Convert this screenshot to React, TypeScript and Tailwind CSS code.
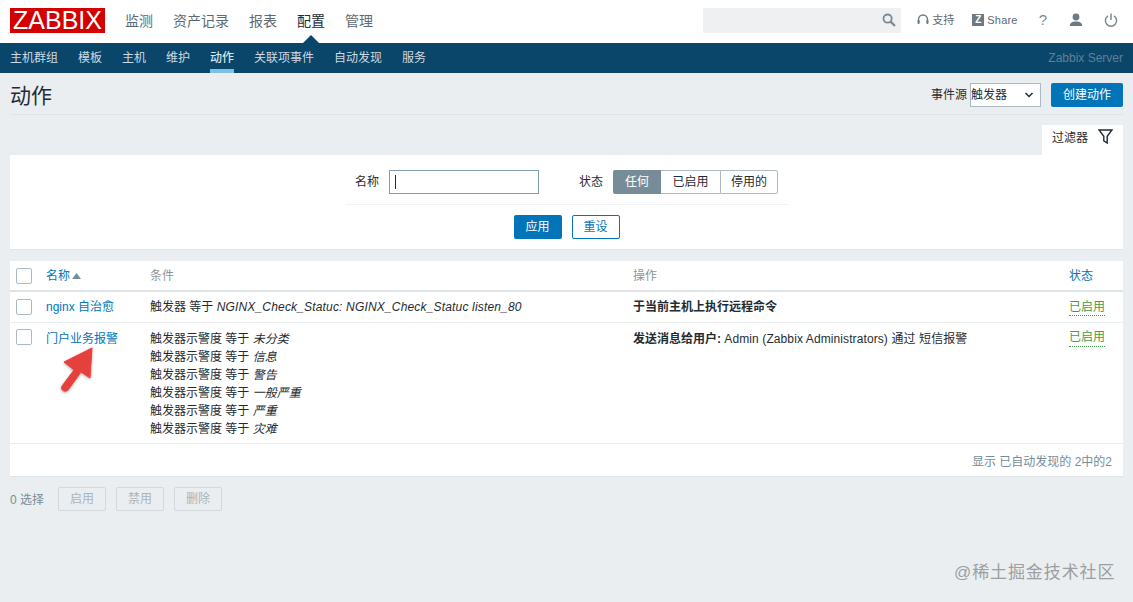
import React from "react";

const font = { fontFamily: '"Liberation Sans", "Noto Sans CJK SC", sans-serif' };

const SearchIcon = () => (
  <svg width="14" height="14" viewBox="0 0 14 14" fill="none" stroke="#7d8a93" strokeWidth="1.8">
    <circle cx="5.6" cy="5.6" r="4.1" />
    <path d="M8.6 8.6L13 13" strokeWidth="2.2" />
  </svg>
);
const HeadsetIcon = () => (
  <svg width="12" height="13" viewBox="0 0 12 13" fill="none">
    <path d="M1.5 8V5.5a4.5 4.5 0 0 1 9 0V8" stroke="#6d7a83" strokeWidth="1.4" />
    <rect x="0.5" y="6" width="2.2" height="4" rx="1" fill="#6d7a83" />
    <rect x="9.3" y="6" width="2.2" height="4" rx="1" fill="#6d7a83" />
  </svg>
);
const UserIcon = () => (
  <svg width="14" height="14" viewBox="0 0 14 14" fill="#6d7a83">
    <circle cx="7" cy="4" r="3.4" />
    <path d="M0.8 13c0-3.2 2.6-4.6 6.2-4.6s6.2 1.4 6.2 4.6z" />
  </svg>
);
const PowerIcon = () => (
  <svg width="14" height="14" viewBox="0 0 14 14" fill="none" stroke="#7d8a93" strokeWidth="1.5">
    <path d="M4 2.8a5.6 5.6 0 1 0 6 0" />
    <path d="M7 0.5V7" />
  </svg>
);
const FilterIcon = () => (
  <svg width="15" height="15" viewBox="0 0 15 15" fill="none" stroke="#1f2c33" strokeWidth="1.4">
    <path d="M1 1h13L9.2 7.2V14L5.8 11.8V7.2z" />
  </svg>
);

const Checkbox = () => (
  <div className="w-4 h-4 bg-white border border-[#acbbc2] rounded-[2px] shrink-0" />
);

const top = ["监测", "资产记录", "报表", "配置", "管理"];
const sub = ["主机群组", "模板", "主机", "维护", "动作", "关联项事件", "自动发现", "服务"];
const severities = ["未分类", "信息", "警告", "一般严重", "严重", "灾难"];

export default function App() {
  return (
    <div className="relative w-[1133px] h-[602px] overflow-hidden bg-[#ebeef0] text-[12px] text-[#1f2c33]" style={font}>
      {/* Header */}
      <header className="h-[43px] bg-white flex items-center">
        <div className="ml-[10px] w-[95px] h-[25px] bg-[#d40000] text-white text-[25px] leading-[25px] text-center font-normal mt-[-2px]">
          ZABBIX
        </div>
        <nav className="ml-[20px] flex gap-[20px] text-[14px] mt-[-1px]">
          {top.map((t) => (
            <span key={t} className={t === "配置" ? "text-[#1f2c33]" : "text-[#5c6a73]"}>
              {t}
            </span>
          ))}
        </nav>
        <div className="ml-auto flex items-center">
          <div className="w-[198px] h-[25px] bg-[#eef0f1] flex items-center justify-end pr-[5px] mt-[-3px]">
            <SearchIcon />
          </div>
          <div className="ml-[16px] flex items-center gap-[3px] text-[#5c6a73] text-[11px] mt-[-3px]">
            <HeadsetIcon />
            <span>支持</span>
          </div>
          <div className="ml-[18px] flex items-center gap-[3px] text-[#5c6a73] text-[11px] mt-[-3px] tracking-[0.2px]">
            <span className="w-[12px] h-[12px] bg-[#6d7a83] text-white text-[10px] leading-[12px] font-bold text-center">Z</span>
            <span>Share</span>
          </div>
          <span className="ml-[21px] text-[#7d8a93] text-[15px] mt-[-3px]">?</span>
          <span className="ml-[22px] flex mt-[-4px]"><UserIcon /></span>
          <span className="ml-[21px] mr-[15px] flex mt-[-4px]"><PowerIcon /></span>
        </div>
      </header>

      {/* Sub nav */}
      <div className="relative h-[30px] bg-[#0a466a] flex items-center pl-[10px] pr-[10px] text-[12px]">
        <div className="absolute left-[303px] top-[-8px] w-0 h-0 border-l-[8px] border-r-[8px] border-b-[8px] border-l-transparent border-r-transparent border-b-[#0a466a]" />
        <div className="flex gap-[20px] h-full items-center">
          {sub.map((t) => (
            <span
              key={t}
              className={
                t === "动作"
                  ? "relative h-full flex items-center text-[#d7e4ec] font-medium border-b-[4px] border-[#7fbfe3] pt-[4px]"
                  : "text-[#cddae2]"
              }
            >
              {t}
            </span>
          ))}
        </div>
        <span className="ml-auto text-[#5d8199]">Zabbix Server</span>
      </div>

      {/* Title row */}
      <div className="mx-[10px] h-[42px] border-b border-[#dfe4e7] flex items-center justify-between">
        <h1 className="text-[21px] text-[#1f2c33] font-normal mt-[5px]">动作</h1>
        <div className="flex items-center mt-[3px]">
          <span>事件源</span>
          <div className="ml-[3px] w-[71px] h-[24px] bg-white border border-[#acbbc2] flex items-center justify-between pr-[6px]">
            <span>触发器</span>
            <svg width="10" height="6" viewBox="0 0 10 6" fill="none" stroke="#1f2c33" strokeWidth="1.5">
              <path d="M1.5 1L5 4.5L8.5 1" />
            </svg>
          </div>
          <button className="ml-[10px] w-[72px] h-[24px] bg-[#0275b8] text-white rounded-[2px]">创建动作</button>
        </div>
      </div>

      {/* Filter tab */}
      <div className="mt-[10px] mr-[10px] flex justify-end">
        <div className="w-[81px] h-[30px] bg-white flex items-start pl-[10px] pt-[4px] gap-[10px]">
          <span>过滤器</span>
          <FilterIcon />
        </div>
      </div>

      {/* Filter panel */}
      <section className="mx-[10px] h-[95px] bg-white border-b border-[#dfe4e7] flex flex-col items-center">
        <div className="w-[442px] h-[50px] ml-[1px] border-b border-[#f0f2f3] flex items-center pt-[5px]">
          <span className="ml-[9px]">名称</span>
          <div className="ml-[10px] w-[150px] h-[24px] bg-white border border-[#7f9fb1] flex items-center pl-[5px]">
            <span className="w-px h-[14px] bg-[#1f2c33]" />
          </div>
          <span className="ml-[40px]">状态</span>
          <div className="ml-[10px] flex h-[24px]">
            <span className="w-[48px] bg-[#768d99] text-white flex items-center justify-center rounded-l-[2px]">任何</span>
            <span className="w-[59px] bg-white border-y border-[#acbbc2] flex items-center justify-center">已启用</span>
            <span className="w-[58px] bg-white border border-[#acbbc2] flex items-center justify-center rounded-r-[2px]">停用的</span>
          </div>
        </div>
        <div className="mt-[10px] flex gap-[10px]">
          <button className="w-[48px] h-[24px] bg-[#0275b8] text-white rounded-[2px]">应用</button>
          <button className="w-[48px] h-[24px] bg-white text-[#0275b8] border border-[#0275b8] rounded-[2px]">重设</button>
        </div>
      </section>

      {/* Table */}
      <section className="mx-[10px] mt-[11px] h-[216px] bg-white border-b border-[#dfe4e7] flex flex-col">
        <div className="h-[31px] border-b-2 border-[#dfe4e7] flex items-center shrink-0">
          <div className="w-[36px] pl-[6px] flex"><Checkbox /></div>
          <div className="w-[104px] flex items-center gap-[2px] text-[#0275b8]">
            <span>名称</span>
            <svg width="9" height="6" viewBox="0 0 9 6" fill="#768d99"><path d="M4.5 0L9 6H0z" /></svg>
          </div>
          <div className="w-[483px] text-[#8a969d]">条件</div>
          <div className="w-[436px] text-[#8a969d]">操作</div>
          <div className="text-[#0275b8]">状态</div>
        </div>
        <div className="h-[31px] border-b border-[#ebeef0] flex items-center shrink-0">
          <div className="w-[36px] pl-[6px] flex"><Checkbox /></div>
          <div className="w-[104px] text-[#0275b8]">nginx 自治愈</div>
          <div className="w-[483px]">
            触发器 等于 <i className="tracking-[0.17px]">NGINX_Check_Statuc: NGINX_Check_Statuc listen_80</i>
          </div>
          <div className="w-[436px] font-bold">于当前主机上执行远程命令</div>
          <div className="text-[#429e47] border-b border-dotted border-[#429e47] leading-[15px] mt-[2px]">已启用</div>
        </div>
        <div className="h-[121px] border-b border-[#ebeef0] flex shrink-0 pt-[6px]">
          <div className="w-[36px] pl-[6px] flex items-start"><Checkbox /></div>
          <div className="w-[104px] text-[#0275b8] leading-[18px] pt-[1px]">门户业务报警</div>
          <div className="w-[483px] leading-[18px] pt-[1px]">
            {severities.map((s) => (
              <div key={s}>
                触发器示警度 等于 <i>{s}</i>
              </div>
            ))}
          </div>
          <div className="w-[436px] leading-[18px] pt-[1px]">
            <b>发送消息给用户:</b> <span className="tracking-[0.1px]">Admin (Zabbix Administrators) 通过 短信报警</span>
          </div>
          <div className="text-[#429e47] border-b border-dotted border-[#429e47] leading-[15px] h-[17px] mt-[1px]">已启用</div>
        </div>
        <div className="flex-1 flex items-center justify-end pr-[11px] pt-[3px] text-[#768d99]">显示 已自动发现的 2中的2</div>
      </section>

      {/* Bulk actions */}
      <div className="mx-[10px] mt-[10px] flex items-center text-[#768d99]">
        <span className="pt-[1px]">0 选择</span>
        <div className="ml-[14px] flex gap-[10px]">
          {["启用", "禁用", "删除"].map((t) => (
            <span key={t} className="w-[48px] h-[24px] border border-[#d3d9dc] rounded-[2px] text-[#a9b4ba] flex items-center justify-center">
              {t}
            </span>
          ))}
        </div>
      </div>

      {/* Red annotation arrow */}
      <svg className="absolute left-[56px] top-[345px]" width="42" height="52" viewBox="0 0 42 52">
        <defs>
          <filter id="s" x="-30%" y="-30%" width="160%" height="160%">
            <feDropShadow dx="0" dy="1" stdDeviation="1.5" floodColor="#000" floodOpacity="0.35" />
          </filter>
        </defs>
        <path
          d="M36 3L34 33L25 27L12 45C9 48 4 45 6 41L18 25L8 17Z"
          fill="#e5403b"
          stroke="#e5403b"
          strokeLinejoin="round"
          filter="url(#s)"
        />
      </svg>

      {/* Watermark */}
      <div className="absolute left-[954px] top-[563px] text-[17px] leading-[20px] text-[#9a9fa3] tracking-[0.9px]">@稀土掘金技术社区</div>
    </div>
  );
}
